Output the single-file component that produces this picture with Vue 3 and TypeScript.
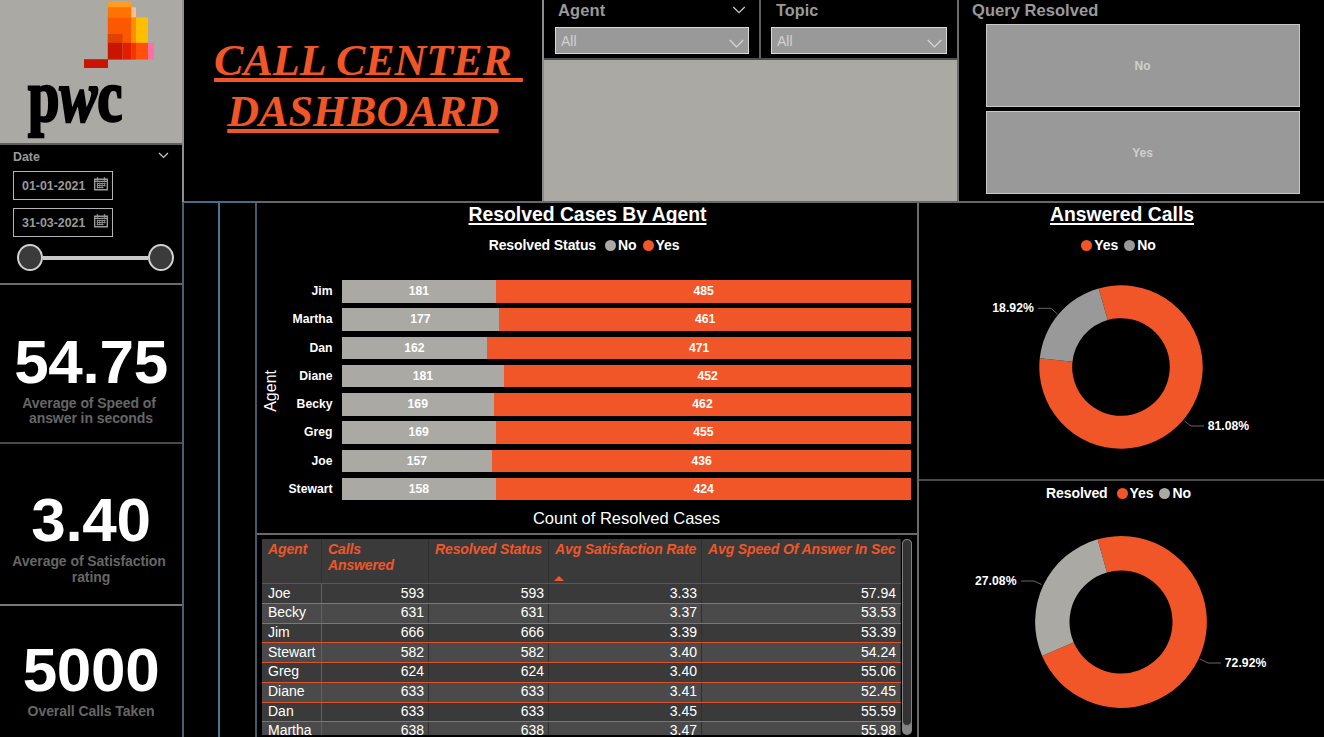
<script setup lang="ts">
interface Kpi { value: string; caption: string; cls: string }
interface AgentCases { agent: string; no: number; yes: number }
interface TableRow { agent: string; calls: string; resolved: string; rate: string; speed: string; h: number }
interface Slice { path: string; color: string }

const kpis: Kpi[] = [
  { value: '54.75', caption: 'Average of Speed of \nanswer in seconds', cls: 'kpi-speed' },
  { value: '3.40', caption: 'Average of Satisfaction \nrating', cls: 'kpi-rating' },
  { value: '5000', caption: 'Overall Calls Taken', cls: 'kpi-calls' },
]

const dates: string[] = ['01-01-2021', '31-03-2021']

const cases: AgentCases[] = [
  { agent: 'Jim', no: 181, yes: 485 },
  { agent: 'Martha', no: 177, yes: 461 },
  { agent: 'Dan', no: 162, yes: 471 },
  { agent: 'Diane', no: 181, yes: 452 },
  { agent: 'Becky', no: 169, yes: 462 },
  { agent: 'Greg', no: 169, yes: 455 },
  { agent: 'Joe', no: 157, yes: 436 },
  { agent: 'Stewart', no: 158, yes: 424 },
]

const rows: TableRow[] = [
  { agent: 'Joe', calls: '593', resolved: '593', rate: '3.33', speed: '57.94', h: 20 },
  { agent: 'Becky', calls: '631', resolved: '631', rate: '3.37', speed: '53.53', h: 20 },
  { agent: 'Jim', calls: '666', resolved: '666', rate: '3.39', speed: '53.39', h: 19 },
  { agent: 'Stewart', calls: '582', resolved: '582', rate: '3.40', speed: '54.24', h: 20 },
  { agent: 'Greg', calls: '624', resolved: '624', rate: '3.40', speed: '55.06', h: 20 },
  { agent: 'Diane', calls: '633', resolved: '633', rate: '3.41', speed: '52.45', h: 20 },
  { agent: 'Dan', calls: '633', resolved: '633', rate: '3.45', speed: '55.59', h: 19 },
  { agent: 'Martha', calls: '638', resolved: '638', rate: '3.47', speed: '55.98', h: 20 },
]

const share = (c: AgentCases): string => `${(c.no / (c.no + c.yes)) * 100}%`

function arc(cx: number, cy: number, r: number, ri: number, from: number, to: number): string {
  const pt = (rad: number, deg: number): string => {
    const a = (deg * Math.PI) / 180
    return `${(cx + rad * Math.sin(a)).toFixed(2)} ${(cy - rad * Math.cos(a)).toFixed(2)}`
  }
  const large = to - from > 180 ? 1 : 0
  return `M${pt(r, from)}A${r} ${r} 0 ${large} 1 ${pt(r, to)}L${pt(ri, to)}A${ri} ${ri} 0 ${large} 0 ${pt(ri, from)}Z`
}

function donut(cx: number, cy: number, r: number, ri: number, yes: number, noColor: string): Slice[] {
  const start = -15.8
  const mid = start + yes * 3.6
  return [
    { path: arc(cx, cy, r, ri, start, mid), color: '#f15628' },
    { path: arc(cx, cy, r, ri, mid, start + 360), color: noColor },
  ]
}

const answered = donut(202, 103, 81.7, 48.8, 81.08, '#999999')
const resolved = donut(202, 116, 85.9, 51.5, 72.92, '#aaa9a4')
</script>

<template>
  <div class="report">
    <aside class="sidebar">
      <div class="brand">
        <svg width="182" height="143" viewBox="0 0 182 143">
          <rect x="107.8" y="1.3" width="23.7" height="6.2" fill="#ff9c22" />
          <rect x="107.8" y="7.3" width="23.7" height="10.4" fill="#ff7300" />
          <rect x="131.3" y="7.3" width="4.7" height="10.4" fill="#ffbd8b" />
          <rect x="107.8" y="17.5" width="23.5" height="25.5" fill="#fb5800" />
          <rect x="107.8" y="34" width="14.7" height="9" fill="#e04100" />
          <rect x="131.2" y="17.5" width="4.8" height="25.5" fill="#ff8d00" />
          <rect x="136" y="17.5" width="12" height="25.5" fill="#ffbf00" />
          <rect x="107.8" y="42.8" width="14.7" height="16.8" fill="#c91400" />
          <rect x="122.5" y="42.8" width="8.8" height="16.8" fill="#e31d00" />
          <rect x="131.2" y="42.8" width="4.8" height="16.8" fill="#f13600" />
          <rect x="136" y="42.8" width="12" height="16.8" fill="#ff500c" />
          <rect x="148" y="42.8" width="6" height="16.8" fill="#ff6fa6" />
          <rect x="84" y="59.2" width="24" height="8.8" fill="#c91400" />
          <text class="wordmark" transform="translate(28 121) scale(.775 1)">p<tspan class="slant">w</tspan>c</text>
        </svg>
      </div>

      <div class="date-slicer">
        <div class="date-head">
          <span>Date</span>
          <svg width="11" height="7" viewBox="0 0 11 7"><path d="M1 1L5.5 5.4L10 1" /></svg>
        </div>
        <div v-for="d in dates" :key="d" class="date-box">
          <span>{{ d }}</span>
          <svg width="14" height="14" viewBox="0 0 14 14">
            <path class="cal-line" d="M.7 2.2H13.3V12.8H.7ZM.7 4.4H13.3M3.5 .3V3.4M10.5 .3V3.4" />
            <path class="cal-grid" d="M2.6 6.5H11.6M2.6 8.5H11.6M2.6 10.5H9.6M3.5 5.6V11.4M5.8 5.6V11.4M8.2 5.6V11.4M10.6 5.6V9.4" />
          </svg>
        </div>
        <div class="slider">
          <i class="knob"></i><i class="track"></i><i class="knob"></i>
        </div>
      </div>

      <div v-for="k in kpis" :key="k.value" class="kpi" :class="k.cls">
        <div class="kpi-value">{{ k.value }}</div>
        <div class="kpi-caption">{{ k.caption }}</div>
      </div>
    </aside>

    <main class="main">
      <header class="top">
        <h1 class="title"><span class="line first">CALL CENTER </span><span class="line">DASHBOARD</span></h1>
        <div class="filters">
          <div class="filter-row">
            <div class="filter agent">
              <div class="filter-head">
                <span>Agent</span>
                <svg width="14" height="8" viewBox="0 0 14 8"><path d="M1.2 1L7 6.6L12.8 1" /></svg>
              </div>
              <div class="select">
                <span>All</span>
                <svg width="15" height="9" viewBox="0 0 15 9"><path d="M.8 1L7.5 7.8L14.2 1" /></svg>
              </div>
            </div>
            <div class="filter topic">
              <div class="filter-head"><span>Topic</span></div>
              <div class="select">
                <span>All</span>
                <svg width="15" height="9" viewBox="0 0 15 9"><path d="M.8 1L7.5 7.8L14.2 1" /></svg>
              </div>
            </div>
          </div>
        </div>
        <div class="query">
          <div class="query-head">Query Resolved</div>
          <button class="tile">No</button>
          <button class="tile">Yes</button>
        </div>
      </header>

      <div class="body">
        <div class="rail rail-a"></div>
        <div class="rail rail-b"></div>

        <section class="center">
          <div class="bar-panel">
            <h2 class="chart-title">Resolved Cases By Agent</h2>
            <div class="legend">
              <span class="legend-name">Resolved Status</span>
              <i class="dot warm-grey"></i><span class="key">No</span>
              <i class="dot orange"></i><span class="key">Yes</span>
            </div>
            <div class="chart">
              <div class="y-title"><span>Agent</span></div>
              <div class="bars">
                <div v-for="c in cases" :key="c.agent" class="bar-row">
                  <span class="bar-label">{{ c.agent }}</span>
                  <div class="bar">
                    <div class="seg no" :style="{ width: share(c) }">{{ c.no }}</div>
                    <div class="seg yes">{{ c.yes }}</div>
                  </div>
                </div>
              </div>
            </div>
            <div class="x-title">Count of Resolved Cases</div>
          </div>

          <div class="table-panel">
            <div class="table">
              <div class="tr th">
                <div>Agent</div>
                <div>Calls<br />Answered</div>
                <div>Resolved Status</div>
                <div>Avg Satisfaction Rate<i class="sort"></i></div>
                <div>Avg Speed Of Answer In Sec</div>
              </div>
              <div v-for="r in rows" :key="r.agent" class="tr td" :style="{ height: r.h + 'px' }">
                <div>{{ r.agent }}</div>
                <div>{{ r.calls }}</div>
                <div>{{ r.resolved }}</div>
                <div>{{ r.rate }}</div>
                <div>{{ r.speed }}</div>
              </div>
            </div>
            <div class="scroll"><div class="thumb"></div></div>
          </div>
        </section>

        <section class="right">
          <div class="donut-panel answered">
            <h2 class="chart-title">Answered Calls</h2>
            <div class="legend">
              <i class="dot orange"></i><span class="key">Yes</span>
              <i class="dot grey"></i><span class="key">No</span>
            </div>
            <svg class="donut" width="405" height="215" viewBox="0 0 405 215">
              <path v-for="s in answered" :key="s.color" :d="s.path" :fill="s.color" />
              <path class="leader" d="M119 44.3H132L138.5 50M265.5 157L272 162H285" />
              <text x="73.3" y="48" textLength="41.5">18.92%</text>
              <text x="288.7" y="166" textLength="41.5">81.08%</text>
            </svg>
          </div>
          <div class="donut-panel resolved">
            <div class="legend">
              <span class="legend-name">Resolved</span>
              <i class="dot orange"></i><span class="key">Yes</span>
              <i class="dot warm-grey"></i><span class="key">No</span>
            </div>
            <svg class="donut" width="405" height="230" viewBox="0 0 405 230">
              <path v-for="s in resolved" :key="s.color" :d="s.path" :fill="s.color" />
              <path class="leader" d="M102 75H115L122.5 78.5M281 153L289 157H302" />
              <text x="56" y="79" textLength="41.5">27.08%</text>
              <text x="305.8" y="161" textLength="41.5">72.92%</text>
            </svg>
          </div>
        </section>
      </div>
    </main>
  </div>
</template>

<style>
body {
  background: #000;
  overflow: hidden;
}
</style>

<style scoped>
* {
  box-sizing: border-box;
}
.report {
  display: flex;
  width: 1324px;
  height: 737px;
  overflow: hidden;
  background: #000;
  color: #fff;
  font-family: "Liberation Sans", Arial, sans-serif;
}
h1,
h2 {
  margin: 0;
}

/* sidebar */
.sidebar {
  flex: none;
  width: 184px;
  border-right: 2px solid;
  border-image: linear-gradient(#8e8e8e 202px, #4a6072 202px) 1;
}
.brand {
  height: 145px;
  background: #aaa9a4;
  border-bottom: 2px solid #5f5f5f;
}
.brand svg {
  display: block;
}
.wordmark {
  font: bold 73px "Liberation Serif", serif;
  fill: #000;
  stroke: #000;
  stroke-width: 2.6;
}
.slant {
  font-style: italic;
}
.date-slicer {
  height: 140px;
  padding: 3px 8px 0 13px;
  border-bottom: 2px solid #6b6b6b;
  color: #999;
  font-weight: bold;
  font-size: 12.4px;
}
.date-head {
  display: flex;
  justify-content: space-between;
  height: 23px;
  line-height: 18px;
}
.date-head svg {
  margin: 4px 5px 0 0;
  fill: none;
  stroke: #ccc;
  stroke-width: 1.2;
}
.date-box {
  display: flex;
  justify-content: space-between;
  width: 100px;
  height: 29px;
  margin-bottom: 8px;
  padding: 0 4px 0 8px;
  border: 1px solid #b4b4b4;
  line-height: 28px;
}
.date-box svg {
  margin-top: 5px;
  fill: none;
}
.cal-line {
  stroke: #999;
  stroke-width: 1.4;
}
.cal-grid {
  stroke: #8a8a8a;
  stroke-width: 1;
}
.slider {
  display: flex;
  align-items: center;
  width: 157px;
  margin: -1px 0 0 4px;
}
.knob {
  flex: none;
  width: 26px;
  height: 27px;
  border: 2px solid #d0d0d0;
  border-radius: 50%;
  background: #3b3b3b;
}
.track {
  flex: 1;
  height: 4px;
  background: #c8c8c8;
}
.kpi {
  text-align: center;
  font-weight: bold;
}
.kpi-speed {
  height: 159px;
  padding-top: 46px;
  border-bottom: 2px solid #4a4a4a;
}
.kpi-rating {
  height: 162px;
  padding-top: 45px;
  border-bottom: 2px solid #787878;
}
.kpi-calls {
  padding-top: 33px;
}
.kpi-value {
  height: 65px;
  font-size: 62px;
  line-height: 62px;
  letter-spacing: -0.3px;
}
.kpi-caption {
  white-space: pre;
  color: #666;
  font-size: 14px;
  line-height: 15.5px;
  letter-spacing: -0.07px;
}
.kpi-speed .kpi-caption {
  line-height: 15px;
}

/* header */
.main {
  flex: 1;
  display: flex;
  flex-direction: column;
}
.top {
  display: flex;
  height: 203px;
  border-bottom: 2px solid;
  border-image: linear-gradient(90deg, #4a6b86 73px, #686868 73px) 1;
}
.title {
  flex: none;
  width: 360px;
  padding-top: 35px;
  border-right: 2px solid #8c8c8c;
  color: #f15628;
  font: italic bold 44px/51px "Liberation Serif", "Times New Roman", serif;
  text-align: center;
}
.line {
  display: block;
  width: max-content;
  margin: 0 auto;
  white-space: pre;
  text-decoration: underline;
  text-decoration-thickness: 4px;
  text-underline-offset: 3px;
  text-decoration-skip-ink: none;
}
.first {
  padding-left: 11px;
}
.filters {
  flex: none;
  width: 415px;
  background: #aaa9a4;
  border-right: 2px solid #6a6a6a;
}
.filter-row {
  display: flex;
  height: 60px;
  background: #000;
  border-bottom: 2px solid #505050;
}
.filter {
  color: #999;
  font-weight: bold;
  font-size: 16.5px;
  line-height: 20px;
}
.agent {
  width: 217px;
  padding: 0 10px 0 11px;
  border-right: 2px solid #606060;
}
.topic {
  flex: 1;
  padding: 0 10px 0 10px;
}
.filter-head {
  display: flex;
  justify-content: space-between;
  height: 27px;
  padding: 0 3px;
  letter-spacing: 0.1px;
}
.filter-head svg {
  margin-top: 6px;
  fill: none;
  stroke: #c8c8c8;
  stroke-width: 1.3;
}
.topic .filter-head {
  padding-left: 5px;
  font-size: 16.2px;
}
.select {
  display: flex;
  justify-content: space-between;
  height: 27px;
  padding: 0 4px 0 5px;
  background: #999;
  border: 1px solid #d8d8d8;
  color: #d2d2d2;
  font-weight: normal;
  font-size: 14px;
  line-height: 27px;
}
.select svg {
  margin-top: 11px;
  fill: none;
  stroke: #d8d8d8;
  stroke-width: 1.2;
}
.query {
  flex: 1;
  padding: 0 24px 0 27px;
}
.query-head {
  height: 24px;
  margin-left: -14px;
  color: #999;
  font-weight: bold;
  font-size: 16.5px;
  line-height: 20px;
  letter-spacing: 0.05px;
}
.tile {
  display: block;
  width: 100%;
  height: 83px;
  margin: 0 0 4px;
  padding: 0 1px 0 0;
  background: #999;
  border: 1px solid #c8c8c8;
  color: #cfcfcf;
  font: bold 12px "Liberation Sans", Arial, sans-serif;
}

/* body */
.body {
  flex: 1;
  display: flex;
  min-height: 0;
}
.rail {
  flex: none;
}
.rail-a {
  width: 36px;
  border-right: 2px solid #4b7494;
}
.rail-b {
  width: 37px;
  border-right: 2px solid #43586a;
}
.center {
  flex: none;
  width: 662px;
  border-right: 2px solid #6a6a6a;
}
.chart-title {
  height: 34px;
  padding-left: 1px;
  text-align: center;
  font-size: 19.35px;
  line-height: 23px;
  text-decoration: underline;
  text-decoration-thickness: 2px;
  text-underline-offset: 2px;
  text-decoration-skip-ink: none;
}
.legend {
  display: flex;
  justify-content: center;
  align-items: center;
  height: 16px;
  font-size: 14px;
  font-weight: bold;
  line-height: 16px;
  letter-spacing: -0.1px;
}
.legend-name {
  margin-right: 9px;
}
.dot {
  width: 11px;
  height: 11px;
  margin-top: 1px;
  border-radius: 50%;
}
.key {
  margin: 0 6px 0 2px;
}
.orange {
  background: #f15628;
}
.grey {
  background: #999;
}
.warm-grey {
  background: #aaa9a4;
}
.bar-panel {
  height: 332px;
  border-bottom: 2px solid #6a6a6a;
}
.chart {
  display: flex;
  padding: 27px 6px 0 0;
}
.y-title {
  width: 28px;
  display: flex;
  align-items: center;
  justify-content: center;
  padding-bottom: 4px;
  font-size: 16px;
}
.y-title span {
  writing-mode: vertical-rl;
  transform: rotate(180deg);
}
.bars {
  flex: 1;
}
.bar-row {
  display: flex;
  height: 28.29px;
}
.bar-label {
  width: 47.5px;
  margin-right: 9px;
  text-align: right;
  font-size: 12.2px;
  font-weight: bold;
  line-height: 22.4px;
}
.bar {
  flex: 1;
  display: flex;
  height: 22.5px;
  font-size: 12.2px;
  font-weight: bold;
  line-height: 23px;
  text-align: center;
}
.no {
  background: #aaa9a4;
}
.yes {
  flex: 1;
  background: #f15628;
}
.x-title {
  padding: 2px 6px 0 85px;
  text-align: center;
  font-size: 16.5px;
  line-height: 20px;
}

/* table */
.table-panel {
  display: flex;
  height: 200px;
  padding: 4px 5px 0 5px;
}
.table {
  width: 639px;
  height: 196px;
  overflow: hidden;
}
.tr {
  display: grid;
  grid-template-columns: 60px 107px 120px 153px 199px;
}
.tr > div {
  border-right: 1px solid #303030;
}
.td > div:first-child {
  border-right-color: #2f6fa8;
  text-align: left;
}
.th {
  height: 45px;
  background: #3a3a3a;
  border-bottom: 1px solid #2c6496;
  color: #f15628;
  font: italic bold 14px/16px "Liberation Sans", Arial, sans-serif;
  letter-spacing: -0.13px;
}
.th > div {
  position: relative;
  padding: 2px 0 0 6px;
  white-space: nowrap;
}
.sort {
  position: absolute;
  left: 5px;
  top: 37px;
  border: 5px solid transparent;
  border-top: 0;
  border-bottom-color: #f15628;
}
.td {
  border-bottom: 1px solid #e0532a;
  background: #3a3a3a;
  font-size: 14px;
  line-height: 19px;
  text-align: right;
}
.td:nth-child(n + 3) {
  line-height: 17px;
}
.td:nth-child(5) {
  line-height: 19px;
}
.td:nth-child(odd) {
  background: #4a4a4a;
}
.td > div {
  padding: 0 4px 0 6px;
}
.scroll {
  flex: none;
  width: 10px;
  height: 196px;
  margin-left: 1px;
  border-radius: 5px;
  background: #858585;
}
.thumb {
  height: 187px;
  border: 1px solid #808080;
  border-radius: 5px;
  background: #333;
}

/* donuts */
.right {
  flex: 1;
}
.answered {
  height: 278px;
  border-bottom: 2px solid #4c4c4c;
}
.resolved {
  padding-top: 4px;
}
.donut {
  display: block;
}
.answered .donut {
  margin-top: 11px;
}
.resolved .donut {
  margin-top: 5px;
}
.donut text {
  fill: #fff;
  font-size: 12.2px;
  font-weight: bold;
}
.leader {
  fill: none;
  stroke: #666;
  stroke-width: 1;
}
</style>
